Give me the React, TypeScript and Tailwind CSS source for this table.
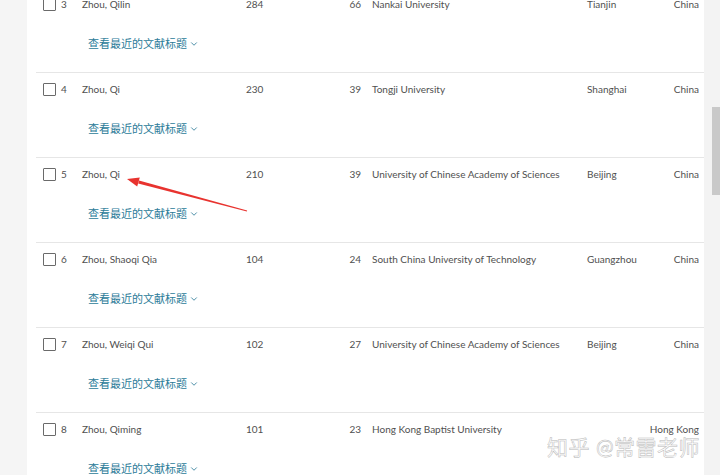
import { ChevronDown } from 'lucide-react'

type Row = {
  idx: number
  name: string
  count: number
  docs: number
  inst: string
  city: string
  country: string
}

const rows: Row[] = [
  { idx: 3, name: 'Zhou, Qilin', count: 284, docs: 66, inst: 'Nankai University', city: 'Tianjin', country: 'China' },
  { idx: 4, name: 'Zhou, Qi', count: 230, docs: 39, inst: 'Tongji University', city: 'Shanghai', country: 'China' },
  { idx: 5, name: 'Zhou, Qi', count: 210, docs: 39, inst: 'University of Chinese Academy of Sciences', city: 'Beijing', country: 'China' },
  { idx: 6, name: 'Zhou, Shaoqi Qia', count: 104, docs: 24, inst: 'South China University of Technology', city: 'Guangzhou', country: 'China' },
  { idx: 7, name: 'Zhou, Weiqi Qui', count: 102, docs: 27, inst: 'University of Chinese Academy of Sciences', city: 'Beijing', country: 'China' },
  { idx: 8, name: 'Zhou, Qiming', count: 101, docs: 23, inst: 'Hong Kong Baptist University', city: '', country: 'Hong Kong' },
]

function AuthorRow({ row }: { row: Row }) {
  return (
    <li className="h-[85px] border-b border-[#e6e6e6] pt-[9px]">
      {/* linha principal */}
      <div className="flex items-center h-[14px] pl-[7px] text-[10px] text-[#505050]">
        <span className="w-[13px] h-[13px] border border-[#6a6a6a] rounded-[1px] bg-white shrink-0" />
        <span className="w-[26px] pl-[5px] shrink-0">{row.idx}</span>
        <span className="w-[164px] shrink-0">{row.name}</span>
        <span className="w-[80px] shrink-0">{row.count}</span>
        <span className="w-[35px] text-right shrink-0">{row.docs}</span>
        <span className="w-[226px] pl-[11px] shrink-0 whitespace-nowrap">{row.inst}</span>
        <span className="w-[60px] shrink-0">{row.city}</span>
        <span className="flex-1 text-right pr-[5px] whitespace-nowrap">{row.country}</span>
      </div>
      {/* link de títulos */}
      <div className="mt-[25px] pl-[52px] flex items-center gap-[2px] text-[11px] text-[#2b7b98]">
        <span>查看最近的文献标题</span>
        <ChevronDown className="w-[10px] h-[10px]" strokeWidth={2} />
      </div>
    </li>
  )
}

export default function App() {
  return (
    <div
      className="relative w-[720px] h-[475px] overflow-hidden flex bg-white"
      style={{ fontFamily: 'Lato, "Noto Sans CJK SC", sans-serif' }}
    >
      <div className="w-[27px] bg-[#f5f5f5] shrink-0" />
      <div className="flex-1 bg-white pl-[9px]">
        <ul className="-mt-[12px]">
          {rows.map((r) => (
            <AuthorRow key={r.idx} row={r} />
          ))}
        </ul>
      </div>
      {/* barra de rolagem */}
      <div className="w-[16px] bg-[#f3f3f3] shrink-0 flex justify-end pt-[107px]">
        <div className="w-[8px] h-[88px] bg-[#c9c9c9]" />
      </div>

      {/* seta vermelha */}
      <svg className="absolute left-0 top-0 pointer-events-none" width="720" height="475">
        <polygon points="138.2,183.6 139.0,180.6 247.1,210.5 246.9,211.5" fill="#e8332f" />
        <polygon points="127,179 139.8,177.4 137.2,186.6" fill="#e8332f" />
      </svg>

      {/* marca d'água */}
      <div
        className="absolute left-[547px] top-[433px] text-[21px] leading-[28px] text-white tracking-[0.5px] whitespace-nowrap"
        style={{ WebkitTextStroke: '0.5px #b8b8b8' }}
      >
        知乎 @常雷老师
      </div>
    </div>
  )
}
